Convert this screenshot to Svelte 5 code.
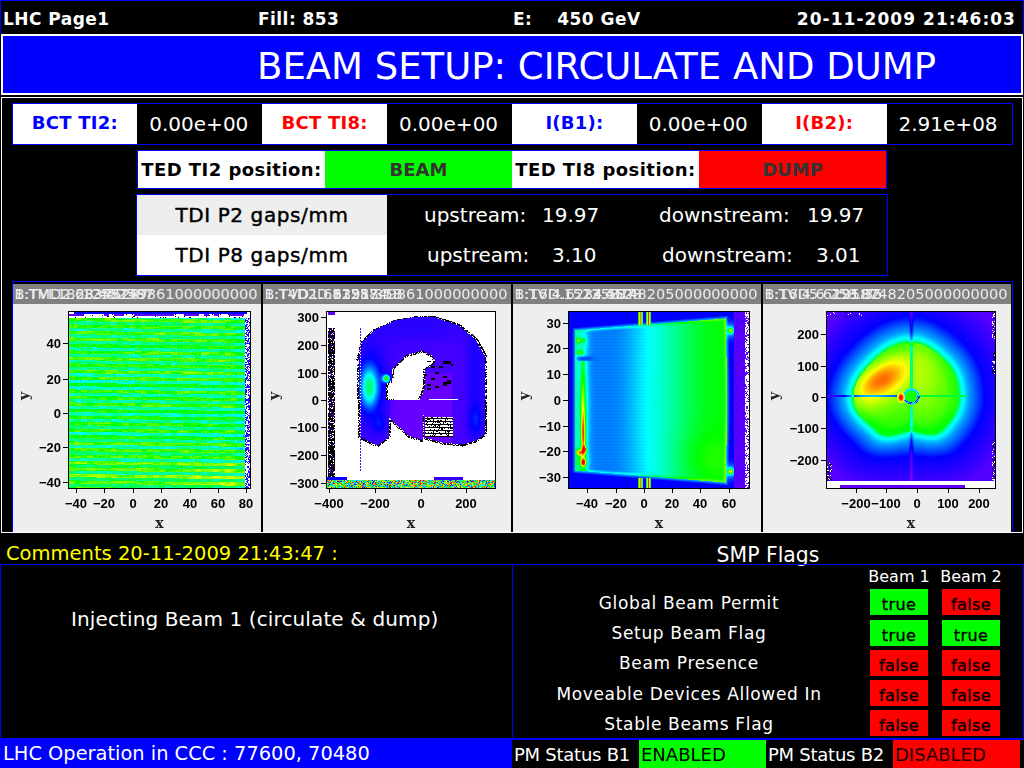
<script>
  // colour scale used by the profile images: purple, blue, cyan, green, yellow, red
  const stops = [[127, 0, 255], [0, 0, 255], [0, 255, 255], [0, 255, 0], [255, 255, 0], [255, 0, 0]]

  function scale(v) {
    const t = Math.max(0, Math.min(0.9999, v)) * 5
    const i = Math.floor(t)
    const f = t - i
    return stops[i].map((c, k) => c + (stops[i + 1][k] - c) * f)
  }

  function rng(seed) {
    let s = seed
    return () => {
      s = (s * 1664525 + 1013904223) % 4294967296
      return s / 4294967296
    }
  }

  const hash = (a, b) => {
    const n = Math.sin(a * 12.9898 + b * 78.233) * 43758.5453
    return n - Math.floor(n)
  }

  const gauss = (x, y, cx, cy, sx, sy, a) =>
    a * Math.exp(-(((x - cx) / sx) ** 2 + ((y - cy) / sy) ** 2))

  const smooth = (a, b, x) => {
    const t = Math.max(0, Math.min(1, (x - a) / (b - a)))
    return t * t * (3 - 2 * t)
  }

  const WHITE = [255, 255, 255]
  const BLACK = [0, 0, 0]

  function shadeTI2(x, y, r) {
    if (y < 2) return x > 4 && x < 178 ? scale(0.2) : WHITE
    if (y < 6) return y < 4 && hash(Math.floor(x / 5), 3) < 0.5 ? scale(0.05) : r() < 0.06 ? BLACK : WHITE
    if (x >= 176) return r() < 0.5 ? WHITE : r() < 0.6 ? scale(0.1) : scale(0.22)
    // alternating rows of the scan, each with its own strength
    const yy = y - (x - 90) * 0.012
    const band = Math.floor(yy / 3.25)
    const sign = band % 2 === 0 ? 1 : -1
    const amp = 0.45 + hash(band, 1) * 0.65
    const fleck = hash(Math.floor(x / 6), Math.floor(yy / 1.6)) - 0.5
    const mid = 1 - Math.min(1, Math.abs(y - 92 - (x - 90) * 0.15) / 70)
    let v = 0.575 + sign * amp * 0.1 - mid * 0.045 + fleck * 0.1 + (r() - 0.5) * 0.06
    if (x > 165) v -= 0.05
    if (y > 150) v += 0.02
    if (sign > 0) v += gauss(x, y, 165, 172, 40, 26, 0.08)
    return scale(v)
  }

  const arch = new Path2D(
    'M31 47 L35 30 L48 17 L68 8 L85 5 L108 5 L131 13 L148 27 L157 43 L157 122 L148 128 L135 132 ' +
    'L115 130 L97 125 L96 102 L95 128 L81 123 L61 105 L61 125 L50 133 L33 125 Z ' +
    'M58 88 L58 72 L64 68 L64 57 L78 43 L95 38 L105 43 L108 50 L98 57 L98 72 L95 82 L92 88 Z'
  )

  function shadeP2(x, y, r, ctx) {
    if (y >= 168) return scale(r() * 0.8 + 0.2)
    if (y >= 165) return x > 106 && x < 136 ? scale(0.12) : x < 20 ? scale(0.18) : WHITE
    if (x >= 1 && x < 8) {
      if (y < 3) return x < 8 ? scale(0.05) : WHITE
      if (y < 16) return WHITE
      return r() < 0.72 ? BLACK : r() < 0.35 ? scale(0.05) : WHITE
    }
    if (x === 33 && y > 15 && y < 159) return y % 3 === 0 ? WHITE : scale(0.05)
    if (y === 87 && ((x > 66 && x < 92) || (x > 101 && x < 131))) return WHITE
    const inside = ctx.isPointInPath(arch, x, y, 'evenodd')
    const nearEdge =
      !inside &&
      (ctx.isPointInPath(arch, x + 2, y, 'evenodd') ||
        ctx.isPointInPath(arch, x - 2, y + 1, 'evenodd') ||
        ctx.isPointInPath(arch, x, y - 2, 'evenodd'))
    if (nearEdge) return r() < 0.7 ? BLACK : WHITE
    if (x > 97 && x < 126 && y > 104 && y < 125) return y % 3 !== 1 && r() < 0.75 ? WHITE : BLACK
    if (x > 97 && x < 126 && y > 48 && y < 80 && hash(Math.floor(x / 4), Math.floor(y / 2)) < 0.17) return BLACK
    if (!inside) return WHITE
    let v = 0.09 + gauss(x, y, 42, 75, 8, 18, 0.28) + gauss(x, y, 42, 72, 18, 38, 0.15)
    v += gauss(x, y, 59, 66, 3.6, 3.6, 0.5)
    v += gauss(x, y, 52, 112, 7, 10, 0.09) + gauss(x, y, 148, 108, 7, 16, 0.1)
    v += gauss(x, y, 90, 14, 60, 16, 0.05) + gauss(x, y, 148, 60, 10, 60, 0.07)
    v -= x > 62 && x < 125 && y > 60 ? 0.05 : 0
    return scale(v)
  }

  function shadeTI8(x, y, r) {
    if (x >= 176) return r() < 0.62 ? WHITE : scale(0.04)
    if (x >= 165) return scale(0.06 + (r() < 0.08 ? 0.08 : 0))
    const bar = Math.min(Math.abs(x - 70.7), Math.abs(x - 79))
    const top = 18 - (x - 6) * 0.08
    const bottom = 158 + (x - 6) * 0.08
    const left = 6
    const right = 156 + Math.sin(((y - 6) / 165) * Math.PI) * 1.5
    const edge = Math.min(y - top, bottom - y, x - left, right - x)
    if (edge < 0) {
      const out = -edge
      if (bar < 2.6 && (y < 13 || y > 165)) return scale(0.97 - bar * 0.22)
      let v = 0.2 + Math.max(0, 3 - out) * 0.05
      v += gauss(x, y, 161, 18, 2.6, 2.6, 0.42) + gauss(x, y, 161, 159, 2.6, 2.6, 0.5)
      v += gauss(x, y, 161, 18, 5, 7, 0.18) + gauss(x, y, 161, 159, 5, 7, 0.18)
      return scale(v)
    }
    let v = 0.3 + smooth(42, 150, x) * 0.29
    v += gauss(x, y, 74, 88, 20, 140, 0.03)
    v += gauss(x, y, 135, 145, 30, 24, 0.04)
    v += edge < 3 ? (3 - edge) * 0.035 : 0
    if (x < 20) v += (20 - x) * 0.004
    if (y % 3 === 0 && x < 95) v -= 0.008
    // hot stripe along the left edge, broken just under the top blob
    v -= gauss(x, y, 12, 46, 9, 2, 0.12)
    if (y > 48) {
      v += gauss(x, y, 13.5, 100, 6, 70, 0.16)
      v += gauss(x, y, 13.5, 95, 2.4, 46, 0.25) + gauss(x, y, 14, 125, 2.2, 24, 0.34)
    }
    v += gauss(x, y, 12, 30, 7, 16, 0.13)
    v += gauss(x, y, 9, 28, 2, 2.4, 0.28) + gauss(x, y, 11, 40, 3, 2.4, 0.26) + gauss(x, y, 14, 28, 2, 2.4, 0.2)
    v += gauss(x, y, 10, 140, 3, 3, 0.42) + gauss(x, y, 14, 150, 2.4, 3, 0.56) + gauss(x, y, 15, 137, 2, 3, 0.46)
    v += gauss(x, y, 11, 148, 7, 10, 0.14)
    return scale(v)
  }

  // distance from the centre to the bright core, read every 45 degrees from east, clockwise
  const coreRadius = [48, 45, 33, 47, 57, 52, 55, 50]

  function radiusAt(th) {
    const t = (((th + Math.PI * 2) % (Math.PI * 2)) / (Math.PI * 2)) * 8
    const i = Math.floor(t) % 8
    const f = t - Math.floor(t)
    const g = (1 - Math.cos(f * Math.PI)) / 2
    return coreRadius[i] * (1 - g) + coreRadius[(i + 1) % 8] * g
  }

  function shadeP8(x, y, r) {
    if (y >= 173) return x > 12 && x < 138 ? scale(0.05) : WHITE
    if (y >= 169) return WHITE
    if (x > 164 && (y < 30 || (y > 38 && y < 62) || y > 125) && r() < 0.35) return r() < 0.5 ? WHITE : BLACK
    if (x < 5 && y > 150 && r() < 0.5) return r() < 0.5 ? WHITE : BLACK
    if (y < 5 && x < 35 && r() < 0.1) return r() < 0.5 ? WHITE : BLACK
    const dx = x - 83
    const dy = y - 85
    const dist = Math.hypot(dx, dy)
    const R = radiusAt(Math.atan2(dy, dx))
    const e = dist - R
    let v
    if (e < 0) v = 0.65 - smooth(-14, -2, e) * 0.03
    else if (e < 3) v = 0.57 - (e / 3) * 0.14
    else if (e < 10) v = 0.43 - ((e - 3) / 7) * 0.1
    else if (e < 26) v = 0.33 - ((e - 10) / 16) * 0.13
    else v = Math.max(0.07, 0.2 - ((e - 26) / 25) * 0.1)
    if (e < 0 && dx < 0) {
      const u = dx * 0.86 - dy * 0.5
      const w = dx * 0.5 + dy * 0.86
      v += gauss(u, w, -16, -30, 30, 15, 0.17) + gauss(u, w, -14, -26, 42, 24, 0.1)
    }
    if (e < 0 && dx >= 0) v += gauss(x, y, 92, 60, 24, 40, 0.09)
    if (e < 0 && dy > 10) v -= (dy - 10) * 0.0012
    // cross of the beam screen, dark above and below the core
    const vline = Math.abs(x - 84)
    if (vline < 2.4 && e >= -3) v -= 0.11 * (1 - vline / 2.4) + 0.01
    if (vline < 1.4 && e < -3 && dist > 9) v -= 0.22
    if (Math.abs(y - 83.5) < 1 && x < 76) v = e < 0 ? v - 0.46 : Math.max(0.03, v - 0.13)
    if (Math.abs(y - 83.5) < 1 && x > 91 && e < 8) v = 0.56
    // aperture ring and hot spot
    const ring = Math.hypot(x - 84, y - 84)
    if (ring < 6) v = 0.62
    else if (ring < 8.2) v = dy < -1 ? 0.38 : r() < 0.35 ? 0.12 : 0.36
    const hot = gauss(x, y, 73.5, 85, 2.6, 3.8, 1)
    if (hot > 0.12) v = 0.72 + hot * 0.35
    return scale(v)
  }

  function paint(canvas, { shade, seed }) {
    const { width, height } = canvas
    const ctx = canvas.getContext('2d')
    const r = rng(seed)
    const img = ctx.createImageData(width, height)
    for (let y = 0; y < height; y++) {
      for (let x = 0; x < width; x++) {
        const c = shade(x, y, r, ctx)
        const p = (y * width + x) * 4
        img.data[p] = c[0]
        img.data[p + 1] = c[1]
        img.data[p + 2] = c[2]
        img.data[p + 3] = 255
      }
    }
    ctx.putImageData(img, 0, 0)
  }

  const minus = (n) => String(n).replace('-', '\u2212')

  const plots = [
    {
      frame: { x: 56, y: 28, w: 181, h: 176 }, shade: shadeTI2, seed: 11,
      xt: [[-40, 63], [-20, 91], [0, 120], [20, 148], [40, 177], [60, 205], [80, 233]],
      yt: [[40, 59], [20, 95], [0, 129], [-20, 163], [-40, 198]],
      layers: ['B:TVI.1823.452587', '1:TMD2.68345287', '1258749861000000000']
    },
    {
      frame: { x: 64, y: 28, w: 168, h: 176 }, shade: shadeP2, seed: 23,
      xt: [[-400, 66], [-200, 112], [0, 158], [200, 203]],
      yt: [[300, 33], [200, 61], [100, 89], [0, 116], [-100, 143], [-200, 171], [-300, 199]],
      layers: ['B:TVD1.681258.1', '1:T4D2D.6391.35B', '1258749861000000000']
    },
    {
      frame: { x: 56, y: 28, w: 180, h: 176 }, shade: shadeTI8, seed: 37,
      xt: [[-40, 74], [-20, 103], [0, 131], [20, 159], [40, 187], [60, 216]],
      yt: [[30, 39], [20, 64], [10, 90], [0, 116], [-10, 142], [-20, 167], [-30, 193]],
      layers: ['B:16D.1523.4528', '1:TVI4.6234.5B7', '1258748205000000000']
    },
    {
      frame: { x: 64, y: 28, w: 168, h: 176 }, shade: shadeP8, seed: 41,
      xt: [[-200, 93], [-100, 123], [0, 154], [100, 185], [200, 216]],
      yt: [[200, 50], [100, 82], [0, 113], [-100, 144], [-200, 176]],
      layers: ['B:16D5.6291.35', '1:TVI4.6 258.B2', '1258748205000000000']
    }
  ]

  const readings = [
    { label: 'BCT TI2:', value: '0.00e+00', tone: 'b1' },
    { label: 'BCT TI8:', value: '0.00e+00', tone: 'b2' },
    { label: 'I(B1):', value: '0.00e+00', tone: 'b1' },
    { label: 'I(B2):', value: '2.91e+08', tone: 'b2' }
  ]

  const flags = [
    { name: 'Global Beam Permit', b1: true, b2: false },
    { name: 'Setup Beam Flag', b1: true, b2: true },
    { name: 'Beam Presence', b1: false, b2: false },
    { name: 'Moveable Devices Allowed In', b1: false, b2: false },
    { name: 'Stable Beams Flag', b1: false, b2: false }
  ]
</script>

<div class="screen">
  <header class="topbar">
    <span>LHC Page1</span>
    <span>Fill: 853</span>
    <span class="energy">E:<span class="energy-val">450 GeV</span></span>
    <span class="stamp">20-11-2009 21:46:03</span>
  </header>

  <h1 class="title">BEAM SETUP: CIRCULATE AND DUMP</h1>

  <main class="panel">
    <section class="readings">
      {#each readings as r}
        <div class="reading-label {r.tone}">{r.label}</div>
        <div class="reading-value">{r.value}</div>
      {/each}
    </section>

    <section class="ted">
      <div class="ted-label">TED TI2 position:</div>
      <div class="ted-state green">BEAM</div>
      <div class="ted-label">TED TI8 position:</div>
      <div class="ted-state red">DUMP</div>
    </section>

    <section class="tdi">
      <div class="tdi-name grey">TDI P2 gaps/mm</div>
      <div class="tdi-vals first">
        <span>upstream:</span><span>19.97</span>
        <span>downstream:</span><span>19.97</span>
      </div>
      <div class="tdi-name">TDI P8 gaps/mm</div>
      <div class="tdi-vals second">
        <span>upstream:</span><span>3.10</span>
        <span>downstream:</span><span>3.01</span>
      </div>
    </section>

    <section class="plots">
      {#each plots as p}
        <figure class="plot">
          <figcaption class="plot-head">
            {#each p.layers as text, i}
              <span class="layer" class:right={i === 2}>{text}</span>
            {/each}
          </figcaption>
          <canvas
            class="image"
            width={p.frame.w}
            height={p.frame.h}
            style="left:{p.frame.x}px;top:{p.frame.y}px"
            use:paint={{ shade: p.shade, seed: p.seed }}
          ></canvas>
          <svg class="axes" width="100%" height="100%">
            <rect x={p.frame.x - 0.5} y={p.frame.y - 0.5} width={p.frame.w + 1} height={p.frame.h + 1} fill="none" stroke="#000" />
            {#each p.xt as [label, x]}
              <line x1={x + 0.5} x2={x + 0.5} y1={p.frame.y + p.frame.h} y2={p.frame.y + p.frame.h + 5} stroke="#000" />
              <text class="tick" x={x} y="224" text-anchor="middle">{minus(label)}</text>
            {/each}
            {#each p.yt as [label, y]}
              <line x1={p.frame.x - 6} x2={p.frame.x} y1={y + 0.5} y2={y + 0.5} stroke="#000" />
              <text class="tick" x={p.frame.x - 8} y={y + 5} text-anchor="end">{minus(label)}</text>
            {/each}
            <text class="axis-name" x={p.frame.x + p.frame.w / 2} y="244" text-anchor="middle">x</text>
            <text class="axis-name" x="16" y="112" text-anchor="middle" transform="rotate(-90 16 112)">y</text>
          </svg>
        </figure>
      {/each}
    </section>
  </main>

  <div class="captions">
    <span class="comments">Comments 20-11-2009 21:43:47 :</span>
    <span class="smp-title">SMP Flags</span>
  </div>

  <div class="lower">
    <section class="comment-box">Injecting Beam 1 (circulate &amp; dump)</section>
    <section class="smp">
      <span></span><span class="beam-head">Beam 1</span><span class="beam-head">Beam 2</span>
      {#each flags as f}
        <span class="flag-name">{f.name}</span>
        <span class="flag {f.b1 ? 'green' : 'red'}">{f.b1}</span>
        <span class="flag {f.b2 ? 'green' : 'red'}">{f.b2}</span>
      {/each}
    </section>
  </div>

  <footer class="footer">
    <div class="operators">LHC Operation in CCC : 77600, 70480</div>
    <div class="pm">
      <span class="pm-name">PM Status B1</span>
      <span class="pm-state green">ENABLED</span>
      <span class="pm-name">PM Status B2</span>
      <span class="pm-state red dark">DISABLED</span>
    </div>
  </footer>
</div>

<style>
  :global(body) {
    background: #000;
  }

  .screen {
    width: 1024px;
    height: 768px;
    overflow: hidden;
    display: flex;
    flex-direction: column;
    background: #000;
    color: #fff;
    font-family: "DejaVu Sans", sans-serif;
    font-size: 20px;
  }

  .topbar {
    height: 34px;
    box-sizing: border-box;
    border: 1px solid #0000ff;
    border-bottom: 0;
    padding: 2px 7px 0 2px;
    display: grid;
    grid-template-columns: 255px 255px 255px 1fr;
    align-items: center;
    font-weight: 700;
    font-size: 17px;
    letter-spacing: 0.45px;
  }

  .energy-val {
    margin-left: 25px;
  }

  .stamp {
    text-align: right;
    letter-spacing: 1.05px;
  }

  .title {
    margin: 0 1px;
    height: 61px;
    box-sizing: border-box;
    border: 2px solid #fff;
    background: #0000ff;
    padding-left: 254px;
    font-weight: 400;
    font-size: 37px;
    line-height: 61px;
    white-space: nowrap;
  }

  .panel {
    margin: 2px 1px 0;
    height: 436px;
    box-sizing: border-box;
    border: 1px solid #fff;
    padding: 5px 10px 0;
    display: flex;
    flex-direction: column;
    align-items: center;
  }

  .readings {
    width: 1001px;
    height: 42px;
    box-sizing: border-box;
    border: 1px solid #0000ff;
    display: grid;
    grid-template-columns: repeat(8, 1fr);
    align-items: stretch;
  }

  .reading-label,
  .reading-value {
    display: flex;
    align-items: center;
    justify-content: center;
  }

  .reading-value {
    padding-right: 2px;
  }

  .reading-label {
    background: #fff;
    font-weight: 700;
    font-size: 18px;
    letter-spacing: 0.25px;
    padding-bottom: 4px;
    box-sizing: border-box;
  }

  .b1 {
    color: #0000ff;
  }

  .b2 {
    color: #ff0000;
  }

  .ted {
    margin-top: 5px;
    width: 750px;
    height: 39px;
    box-sizing: border-box;
    border: 1px solid #0000ff;
    display: grid;
    grid-template-columns: 187px 187px 187px 1fr;
  }

  .ted-label,
  .ted-state {
    display: flex;
    align-items: center;
    justify-content: center;
    font-weight: 700;
    font-size: 18px;
    white-space: nowrap;
  }

  .ted-label {
    background: #fff;
    color: #000;
    letter-spacing: 0.45px;
  }

  .ted-state {
    color: #333;
  }

  .green {
    background: #00ff00;
  }

  .red {
    background: #ff0000;
  }

  .tdi {
    margin-top: 5px;
    width: 752px;
    height: 82px;
    box-sizing: border-box;
    border: 1px solid #0000ff;
    display: grid;
    grid-template-columns: 250px 1fr;
    grid-template-rows: 40px 40px;
  }

  .tdi-name {
    background: #fff;
    color: #000;
    letter-spacing: 0.6px;
    -webkit-text-stroke: 0.45px #000;
    display: flex;
    align-items: center;
    justify-content: center;
  }

  .tdi-name.grey {
    background: #eeeeee;
  }

  .tdi-vals {
    display: grid;
    align-items: center;
    white-space: nowrap;
  }

  .tdi-vals.first {
    grid-template-columns: 118px 117px 148px 1fr;
    padding-left: 37px;
  }

  .tdi-vals.second {
    grid-template-columns: 125px 110px 154px 1fr;
    padding-left: 40px;
  }

  .plots {
    margin-top: 5px;
    width: 1001px;
    height: 251px;
    box-sizing: border-box;
    border: 1px solid #0000ff;
    border-bottom: 0;
    display: grid;
    grid-template-columns: repeat(4, 248px);
    column-gap: 2px;
    padding: 2px 1px 0 0;
  }

  .plot {
    position: relative;
    margin: 0;
    background: #eeeeee;
    min-width: 0;
  }

  .plot-head {
    position: relative;
    height: 20px;
    background: #808080;
    overflow: hidden;
  }

  .layer {
    position: absolute;
    left: 2px;
    top: 0;
    color: #eeeeee;
    font-size: 14.5px;
    line-height: 20px;
    white-space: nowrap;
  }

  .layer.right {
    left: auto;
    right: 3px;
  }

  .image {
    position: absolute;
    display: block;
  }

  .axes {
    position: absolute;
    left: 0;
    top: 0;
    pointer-events: none;
  }

  .tick {
    font-family: "Liberation Sans", sans-serif;
    font-size: 13px;
    font-weight: 700;
    fill: #000;
  }

  .axis-name {
    font-family: "DejaVu Serif", serif;
    font-size: 14px;
    font-weight: 700;
    fill: #222;
  }

  .captions {
    height: 31px;
    display: grid;
    grid-template-columns: 512px 1fr;
    align-items: end;
  }

  .comments {
    color: #ffff00;
    padding-left: 6px;
    font-size: 19.5px;
    line-height: 20px;
  }

  .smp-title {
    text-align: center;
    font-size: 20.4px;
    line-height: 18px;
  }

  .lower {
    height: 175px;
    display: grid;
    grid-template-columns: 512px 512px;
  }

  .comment-box {
    box-sizing: border-box;
    border: 1px solid #0000ff;
    border-right: 0;
    padding: 39px 0 0 70px;
    line-height: 30px;
    letter-spacing: 0.12px;
  }

  .smp {
    box-sizing: border-box;
    border: 1px solid #0000ff;
    padding: 0 23px 0 0;
    display: grid;
    grid-template-columns: 1fr 58px 58px;
    grid-template-rows: 20px repeat(5, 26px);
    column-gap: 14px;
    row-gap: 4.25px;
    align-items: center;
    justify-items: center;
  }

  .beam-head {
    margin-top: 3px;
    font-size: 16px;
    line-height: 22px;
    white-space: nowrap;
  }

  .flag-name {
    margin-right: -9px;
    margin-top: 1px;
    font-size: 17px;
    letter-spacing: 0.65px;
    white-space: nowrap;
  }

  .flag {
    align-self: stretch;
    justify-self: stretch;
    color: #000;
    font-size: 16px;
    text-align: center;
    line-height: 31px;
    letter-spacing: 0.4px;
    -webkit-text-stroke: 0.35px #000;
  }

  .footer {
    height: 29px;
    display: grid;
    grid-template-columns: 512px 512px;
    background: #000;
  }

  .operators {
    background: #0000ff;
    padding-left: 3px;
    font-size: 19.4px;
    line-height: 31px;
    white-space: nowrap;
    margin-top: -1px;
    height: 30px;
  }

  .pm {
    box-sizing: border-box;
    border-top: 1px solid #0000ff;
    border-bottom: 1px solid #0000ff;
    display: grid;
    grid-template-columns: repeat(4, 127px);
    align-items: stretch;
    font-size: 18px;
    line-height: 30px;
    white-space: nowrap;
  }

  .pm-name {
    padding-left: 2px;
    letter-spacing: -0.25px;
  }

  .pm-state {
    color: #000;
    padding-left: 2px;
  }

  .pm-state.dark {
    color: #220000;
  }
</style>
